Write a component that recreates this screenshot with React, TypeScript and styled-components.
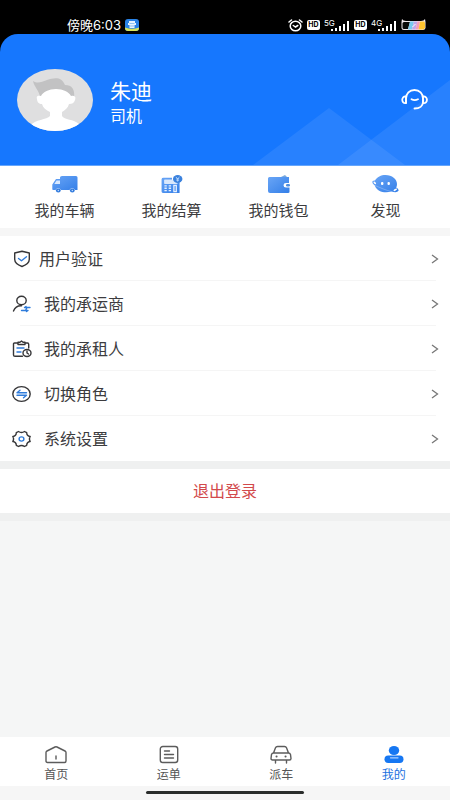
import React from 'react';
import styled, { createGlobalStyle } from 'styled-components';

const GlobalStyle = createGlobalStyle`
  * { box-sizing: border-box; }
  body {
    margin: 0;
    background: #f5f6f6;
    color: #3c3c3e;
    font-family: "Noto Sans CJK SC", sans-serif;
    font-weight: 400;
  }
  svg { display: block; flex: none; }
  button { font: inherit; color: inherit; border: 0; padding: 0; background: none; cursor: pointer; }
  a { color: inherit; text-decoration: none; }
`;

const Page = styled.div`
  min-height: 100vh;
  display: flex;
  flex-direction: column;
`;

const StatusBar = styled.div`
  height: 34px;
  padding: 16px 24px 0 67px;
  display: flex;
  align-items: center;
  justify-content: space-between;
  background: #000;
  color: #fff;
`;

const StatusGroup = styled.div<{ $gap: number }>`
  display: flex;
  align-items: center;
  gap: ${(p) => p.$gap}px;
`;

const Clock = styled.span`
  font-family: Inter, "Noto Sans CJK SC", sans-serif;
  font-size: 13px;
  font-weight: 400;
  line-height: 16px;
`;

const HdBadge = styled.span`
  width: 13px;
  height: 10px;
  border-radius: 2px;
  background: #fff;
  color: #000;
  font: 700 7px/10px Inter, sans-serif;
  text-align: center;
`;

const SignalBox = styled.span`
  position: relative;
  width: 26px;
  height: 12px;
`;

const SignalLabel = styled.span`
  position: absolute;
  left: 0;
  top: 0;
  font: 400 8px/8px Inter, sans-serif;
`;

const HeaderBack = styled.div`
  background: #000;
`;

const Header = styled.header`
  position: relative;
  display: flex;
  align-items: center;
  gap: 17px;
  height: 132px;
  padding: 0 22px 0 17px;
  overflow: hidden;
  border-radius: 18px 18px 0 0;
  border-bottom: 1px solid #66a6fb;
  background: #1677fe;
  color: #fff;
`;

const Hills = styled.svg`
  position: absolute;
  right: 0;
  bottom: 0;
`;

const Identity = styled.div`
  flex: 1;
  display: flex;
  flex-direction: column;
  padding-top: 2px;
`;

const UserName = styled.h1`
  margin: 0;
  font-size: 21px;
  line-height: 28px;
  font-weight: 400;
`;

const UserRole = styled.span`
  font-size: 16px;
  line-height: 22px;
`;

const SupportButton = styled.button`
  position: relative;
`;

const Shortcuts = styled.nav`
  display: grid;
  grid-template-columns: repeat(4, 1fr);
  height: 62px;
  padding: 0 11px;
  background: #fff;
`;

const Shortcut = styled.button`
  display: flex;
  flex-direction: column;
  align-items: center;
  justify-content: center;
  gap: 7px;
  font-size: 15px;
  line-height: 20px;
`;

const Band = styled.div<{ $color: string; $height: number }>`
  height: ${(p) => p.$height}px;
  background: ${(p) => p.$color};
`;

const Menu = styled.div`
  background: #fff;
`;

const MenuItem = styled.button<{ $gap: number }>`
  display: flex;
  align-items: center;
  gap: ${(p) => p.$gap}px;
  width: 100%;
  height: 45px;
  padding: 0 11px 0 12px;
  font-size: 16px;
  line-height: 24px;
  text-align: left;
  background: linear-gradient(#f5f5f5, #f5f5f5) 20px 100% / calc(100% - 34px) 1px no-repeat;

  &:last-child { background: none; }
`;

const MenuLabel = styled.span`
  flex: 1;
  padding-bottom: 2px;
`;

const Logout = styled.button`
  height: 44px;
  padding-bottom: 2px;
  background: #fff;
  color: #d24a4c;
  font-size: 16px;
  line-height: 24px;
`;

const Filler = styled.div`
  flex: 1;
`;

const TabBar = styled.nav`
  display: grid;
  grid-template-columns: repeat(4, 1fr);
  height: 49px;
  background: #fff;
`;

const Tab = styled.a<{ $active?: boolean }>`
  display: flex;
  flex-direction: column;
  align-items: center;
  gap: 1px;
  padding-top: 8px;
  font-size: 12px;
  line-height: 18px;
  color: ${(p) => (p.$active ? '#1b70e0' : '#555')};
`;

const HomeArea = styled.div`
  display: flex;
  justify-content: center;
  height: 14px;
  padding-top: 5px;
  background: #f6f6f6;
`;

const HomeBar = styled.div`
  width: 35%;
  height: 3px;
  border-radius: 2px;
  background: #2a2d2c;
`;

const Signal = ({ label }: { label: string }) => (
  <SignalBox>
    <SignalLabel>{label}</SignalLabel>
    <svg width="26" height="12" fill="#fff">
      <rect x="7" y="10" width="2" height="2" />
      <rect x="11" y="9" width="2" height="3" />
      <rect x="15" y="7" width="2" height="5" />
      <rect x="19" y="5" width="2" height="7" />
      <rect x="23" y="2" width="2" height="10" />
    </svg>
  </SignalBox>
);

const AppBadge = () => (
  <svg width="14" height="12" viewBox="0 0 14 12">
    <rect width="14" height="12" rx="3" fill="#2a83e6" />
    <path d="M0 8.500Q7 11 14 8.500V9a3 3 0 0 1-3 3H3a3 3 0 0 1-3-3Z" fill="#d8e45a" />
    <path d="M4 2h6v2h1v2H9.500v3h-5V6H3V4h1Z" fill="#e8f5ff" />
    <path d="M4.500 4.500h5M5 7h4" stroke="#69aef0" strokeWidth=".7" />
  </svg>
);

const Alarm = () => (
  <svg width="15" height="13" viewBox="0 0 15 13" fill="none" stroke="#fff" strokeWidth="1.500" strokeLinecap="round">
    <ellipse cx="7.500" cy="7" rx="5.300" ry="4.800" />
    <path d="M1 3 3.500 1M14 3l-2.500-2M5.300 6.500l2.200 1.500 2.300-1.500" />
  </svg>
);

const Battery = () => (
  <svg width="25" height="12" viewBox="0 0 25 12">
    <path d="M1 0q1 2 4 2h15q3 0 4-2l.5 3v6q-.5 2-2.500 2H3Q.5 11 .5 8.500V3Z" fill="#f3e9ef" />
    <path d="M3 3h6L7 10H3Q1.500 10 1.500 8.500v-4Q1.500 3 3 3Z" fill="#080808" />
    <path d="M9 2.500h4L11 10.500H7Z" fill="#78c9ef" />
    <path d="M13 2.500h3.500l-2 8H11Z" fill="#c0a6ea" />
    <path d="M16.500 2.500H19l-1.500 8h-3Z" fill="#f59bb8" />
    <path d="M19 2.500h4.500l.5 2v4q-.5 2-2 2h-4.500Z" fill="#ffc42f" />
    <path d="m11.500 8 3-3" stroke="#fff" />
  </svg>
);

const Avatar = () => (
  <svg width="76" height="62" viewBox="0 0 76 62" role="img" aria-label="头像">
    <defs>
      <clipPath id="face"><ellipse cx="38" cy="31" rx="38" ry="31" /></clipPath>
    </defs>
    <g clipPath="url(#face)">
      <rect width="76" height="62" fill="#dfdfe0" />
      <path d="M23 28C22 21 17 18 16 12c5 3 8 1 14-1 8-3 15-3 18 5 7 0 10 4 9 13l-2 4H25Z" fill="#c2c2c3" />
      <path d="M24 27c2-4 8-7 15-7s13 3 15 7c4-1 5 1 4 4-1 3-3 4-6 4-1 4-4 6-7 8v4c2 4 12 3 17 8l5 9H8l5-7c5-7 17-6 20-10v-4c-4-2-7-4-8-8-3 0-5-2-5-5-1-3 1-4 4-3Z" fill="#fff" />
    </g>
  </svg>
);

const Headset = () => (
  <svg width="27" height="21" viewBox="0 0 27 21" fill="none" stroke="#fff" strokeWidth="1.800" strokeLinecap="round" strokeLinejoin="round">
    <path d="M5 14V9.500C5 4.500 8.500 1 13.500 1S22 4.500 22 9.500V13c0 4-3.500 6.500-8.500 6.500" />
    <path d="M5 7.500c-5-.8-5 7.500 0 6.500ZM22 7.500c5.300-.8 5.300 7.500 0 6.500ZM10.500 10.300c1.800 1 4.600 1 6.500 0" />
  </svg>
);

const Gradient = ({ id }: { id: string }) => (
  <defs>
    <linearGradient id={id} x1="0" y1="0" x2="1" y2="1">
      <stop stopColor="#69a5f6" />
      <stop offset="1" stopColor="#347fe8" />
    </linearGradient>
  </defs>
);

const TruckIcon = () => (
  <svg width="26" height="18" viewBox="0 0 26 18">
    <Gradient id="truck" />
    <path d="M10 1h14q1.500 0 1.500 1.500V15H23a3 3 0 0 0-5.500 0H9a3 3 0 0 0-5.500 0H1q-.7 0-.7-1V9.500L4 4h4V2.500Q8 1 10 1Z" fill="url(#truck)" />
    <path d="M4.500 5.500H8V9H2.300Z" fill="#d9e9ff" />
    <ellipse cx="6.300" cy="15.500" rx="2.400" ry="2.100" fill="#327bdd" />
    <ellipse cx="20.300" cy="15.500" rx="2.400" ry="2.100" fill="#327bdd" />
    <circle cx="6.300" cy="15.500" r=".7" fill="#c5ddff" />
    <circle cx="20.300" cy="15.500" r=".7" fill="#c5ddff" />
  </svg>
);

const CalculatorIcon = () => (
  <svg width="22" height="18" viewBox="0 0 22 19">
    <Gradient id="calculator" />
    <path d="M2 3h9v2H3v4h14v-1h2v11H1.500Q0 19 0 17.500V4.500Q0 3 2 3Z" fill="url(#calculator)" />
    <path d="M3 5h9q1 3 4 3.500v1H3Z" fill="#d9e8fc" />
    <path d="M3 11.500h2.500M7.500 11.500H10M3 14h2.500M7.500 14H10M3 16.500h2.500M7.500 16.500H10M13 11v6.500h2.500V11Z" stroke="#e5f0ff" strokeWidth="1.400" fill="none" />
    <ellipse cx="17" cy="4.200" rx="5" ry="4.200" fill="#3a81dd" />
    <path d="m15 2 2 2 2-2M15.500 4h3M15.500 5.500h3M17 4v3" stroke="#c8e1ff" strokeWidth=".8" fill="none" />
  </svg>
);

const WalletIcon = () => (
  <svg width="22" height="18" viewBox="0 0 22 18">
    <Gradient id="wallet" />
    <path d="M1.500 2H21v6h-3q-2.500 0-2.500 2.200T18 12.500h3.500V17q0 1-1.500 1H2q-2 0-2-2V3.500Q0 2 1.500 2Z" fill="url(#wallet)" />
    <path d="m13 2 4-2 2 2Z" fill="#7aa9dc" />
    <rect x="18" y="9" width="4" height="2.500" rx="1.200" fill="#518fdf" />
  </svg>
);

const DiscoverIcon = () => (
  <svg width="27" height="18" viewBox="0 0 27 18">
    <Gradient id="discover" />
    <path d="M3 5.500C5 2 9 0 13.500 0 20 0 25 4 25 9q0 2-.8 3.500 2.800 1.500 2.300 3.300-1.500 2.500-7 .7C13 18.500 5 17 2.800 10.500-.5 8.500-.5 5 3 5.500Z" fill="url(#discover)" />
    <path d="M3 10.500c5 2 11 5 16.500 6" fill="none" stroke="#94bef7" strokeWidth=".6" />
    <ellipse cx="2.800" cy="7.800" rx="1.600" ry=".9" fill="#fff" transform="rotate(45 2.800 7.800)" />
    <ellipse cx="23.300" cy="14.800" rx="2" ry=".9" fill="#fff" transform="rotate(-30 23.300 14.800)" />
    <rect x="9" y="7" width="2.400" height="3" rx="1" fill="#fff" />
    <rect x="15.500" y="7" width="2.400" height="3" rx="1" fill="#fff" />
  </svg>
);

const LineIcon = styled.svg.attrs({ width: 20, height: 18, viewBox: '0 0 20 18' })`
  fill: none;
  stroke: #363638;
  stroke-width: 1.4;
  stroke-linecap: round;
  stroke-linejoin: round;

  .accent { stroke: #2f7cdb; }
`;

const ShieldIcon = () => (
  <LineIcon>
    <path d="M10 1.300 17.300 3v6.300c0 3.500-3 5.700-7.300 7.200-4.300-1.500-7.300-3.700-7.300-7.200V3Z" />
    <path className="accent" d="m6.500 8.500 3 2.300 5-4" />
  </LineIcon>
);

const CarrierIcon = () => (
  <LineIcon>
    <ellipse cx="9.500" cy="5.500" rx="4.700" ry="4.200" />
    <path d="M1.500 16c1.500-4 4-5.500 8-5.300" />
    <path className="accent" d="M18 12.500h-5.500l1.500-1M9.500 15.500H16l-1.500 1M15 12.500l-1.500 3" />
  </LineIcon>
);

const RenterIcon = () => (
  <LineIcon>
    <path d="M6 3H2.500Q1.500 3 1.500 4v11q0 1.300 1.500 1.300h7.500M13 3h2.500q1.200 0 1.200 1.200V8M6 4.500V2.200h2L9.500 1 11 2.200h2v2.300Z" />
    <path className="accent" d="M5 8h7M5 12h4" />
    <ellipse cx="15" cy="13" rx="4" ry="3.500" />
    <path d="M15 11v2l1.500 1" />
  </LineIcon>
);

const SwitchIcon = () => (
  <LineIcon>
    <ellipse cx="9.500" cy="9" rx="8.700" ry="7.400" />
    <path className="accent" d="M14.500 7.700H5l3-2.400M5 10.300h9.500l-3 2.400" />
  </LineIcon>
);

const SettingsIcon = () => (
  <LineIcon>
    <path d="M6.500 1.500q3 2 6 0l2.200 1.200q0 3.300 3.500 3.800-1.500 2.500 0 5-3.500.5-3.500 3.800l-2.200 1.200q-3-2-6 0l-2.200-1.200q0-3.300-3.500-3.800 1.500-2.500 0-5 3.500-.5 3.500-3.800Z" />
    <ellipse className="accent" cx="9.500" cy="9" rx="2.400" ry="2.100" />
  </LineIcon>
);

const Chevron = () => (
  <svg width="8" height="10" viewBox="0 0 8 10" fill="none" stroke="#777" strokeWidth="1.300">
    <path d="m1 1 5.500 4L1 9" />
  </svg>
);

const TabIcon = styled.svg.attrs({ width: 22, height: 19, viewBox: '0 0 22 19' })`
  fill: none;
  stroke: #5c5c5c;
  stroke-width: 1.4;
  stroke-linecap: round;
  stroke-linejoin: round;
`;

const HomeIcon = () => (
  <TabIcon>
    <path d="M1 7.500q0-1 1-1.500l8-4q1-.5 2 0l8 4q1 .5 1 1.500V16q0 1.500-1.500 1.500h-17Q1 17.500 1 16ZM11 11v3" />
  </TabIcon>
);

const OrderIcon = () => (
  <TabIcon>
    <rect x="2.300" y="1.500" width="17.400" height="16" rx="2.500" />
    <path d="M6.500 6h5M6.500 9.500h9M6.500 13h9" />
  </TabIcon>
);

const CarIcon = () => (
  <TabIcon>
    <path d="M3.500 8 5.500 2.800Q6 1.500 7.500 1.500h7q1.500 0 2 1.300l2 5.200M1.500 9.500Q2 8 3.500 8h15q1.500 0 2 1.500l.5 4q0 1.500-1.500 1.500h-17Q1 15 1 13.500ZM5.500 15.500v2.500M16.500 15.500v2.500" />
    <path d="M6.500 11.500h.1M15.500 11.500h.1" strokeWidth="2" />
  </TabIcon>
);

const MineIcon = () => (
  <svg width="22" height="19" viewBox="0 0 22 19" fill="#1677f2">
    <ellipse cx="11" cy="5.500" rx="5.200" ry="4.500" />
    <rect x="1.500" y="10.500" width="19" height="7.500" rx="3.700" />
    <path d="M7.500 12.800h7.500" stroke="#acd0ff" strokeWidth="1.300" strokeLinecap="round" />
  </svg>
);

const shortcuts = [
  { label: '我的车辆', Icon: TruckIcon },
  { label: '我的结算', Icon: CalculatorIcon },
  { label: '我的钱包', Icon: WalletIcon },
  { label: '发现', Icon: DiscoverIcon },
];

const menuItems = [
  { label: '用户验证', Icon: ShieldIcon, gap: 7 },
  { label: '我的承运商', Icon: CarrierIcon, gap: 12 },
  { label: '我的承租人', Icon: RenterIcon, gap: 12 },
  { label: '切换角色', Icon: SwitchIcon, gap: 12 },
  { label: '系统设置', Icon: SettingsIcon, gap: 12 },
];

const tabs = [
  { label: '首页', Icon: HomeIcon },
  { label: '运单', Icon: OrderIcon },
  { label: '派车', Icon: CarIcon },
  { label: '我的', Icon: MineIcon, active: true },
];

export default function App() {
  return (
    <Page>
      <GlobalStyle />
      <StatusBar>
        <StatusGroup $gap={4}>
          <Clock>傍晚6:03</Clock>
          <AppBadge />
        </StatusGroup>
        <StatusGroup $gap={4}>
          <Alarm />
          <HdBadge>HD</HdBadge>
          <Signal label="5G" />
          <HdBadge>HD</HdBadge>
          <Signal label="4G" />
          <Battery />
        </StatusGroup>
      </StatusBar>
      <HeaderBack>
        <Header>
          <Hills width="200" height="90" viewBox="0 0 200 90" fill="#fff" fillOpacity=".08">
            <path d="M3 90 79 33 155 90Z" />
            <path d="M88 90 200 5V90Z" />
          </Hills>
          <Avatar />
          <Identity>
            <UserName>朱迪</UserName>
            <UserRole>司机</UserRole>
          </Identity>
          <SupportButton aria-label="客服"><Headset /></SupportButton>
        </Header>
      </HeaderBack>
      <Shortcuts>
        {shortcuts.map(({ label, Icon }) => (
          <Shortcut key={label}><Icon />{label}</Shortcut>
        ))}
      </Shortcuts>
      <Band $color="#f6f6f6" $height={8} />
      <Menu>
        {menuItems.map(({ label, Icon, gap }) => (
          <MenuItem key={label} $gap={gap}>
            <Icon />
            <MenuLabel>{label}</MenuLabel>
            <Chevron />
          </MenuItem>
        ))}
      </Menu>
      <Band $color="#eff0f0" $height={8} />
      <Logout>退出登录</Logout>
      <Band $color="#eff0f0" $height={8} />
      <Filler />
      <TabBar>
        {tabs.map(({ label, Icon, active }) => (
          <Tab key={label} href="#" $active={active} aria-current={active ? 'page' : undefined}>
            <Icon />
            {label}
          </Tab>
        ))}
      </TabBar>
      <HomeArea><HomeBar /></HomeArea>
    </Page>
  );
}
